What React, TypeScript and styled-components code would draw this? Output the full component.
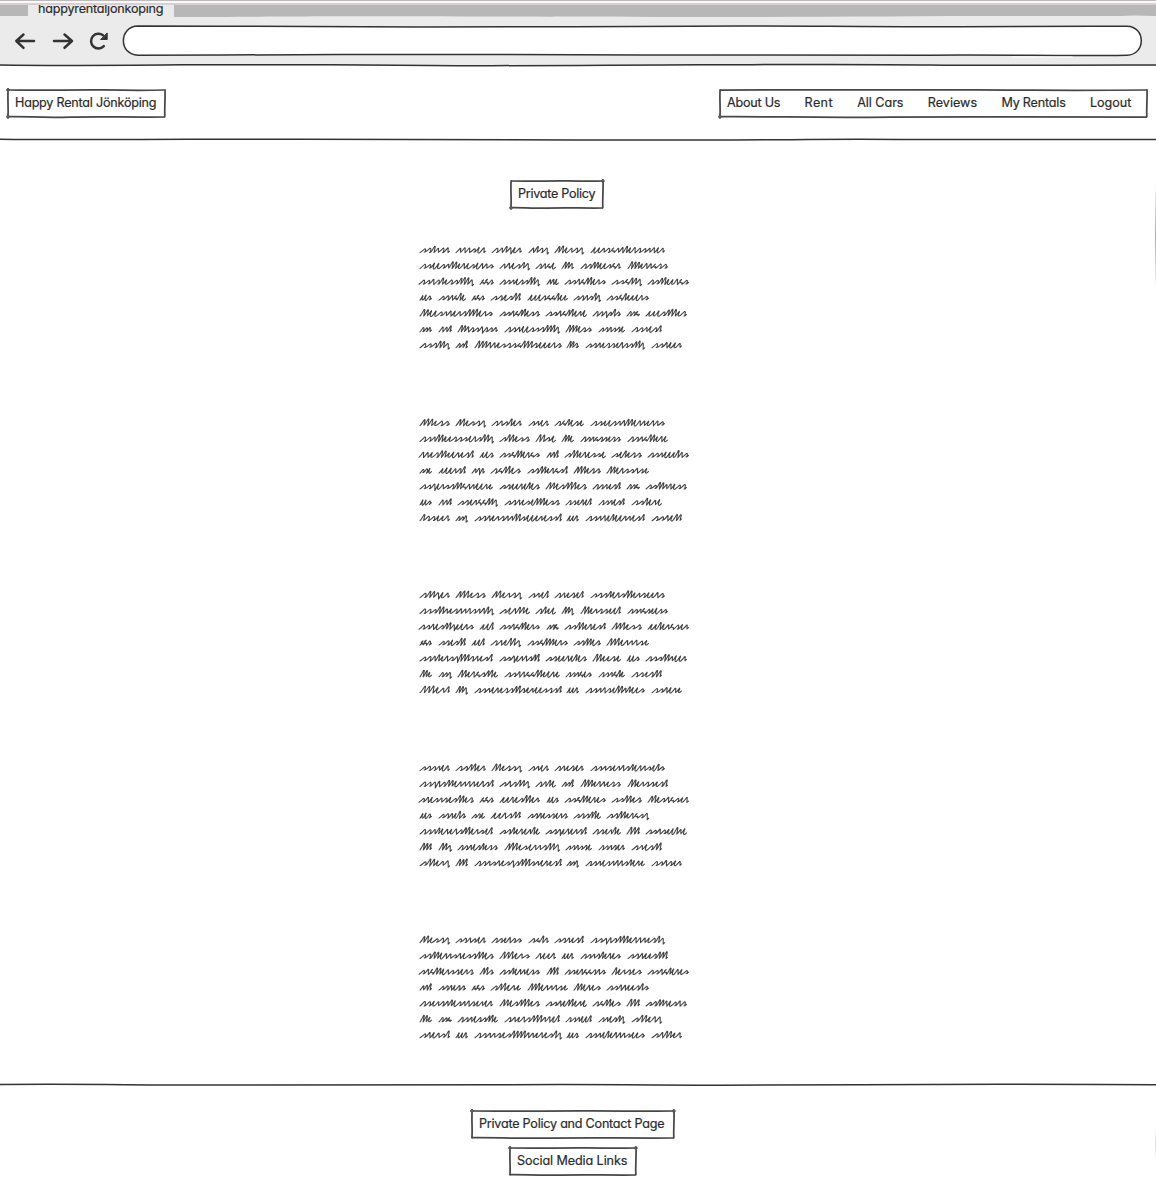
import React, { useLayoutEffect, useRef } from "react";
import styled, { createGlobalStyle } from "styled-components";

const ink = "#333333";

const GlobalStyle = createGlobalStyle`
  * { box-sizing: border-box; }
  body { margin: 0; background: #fff; color: #2b2b2b; font-family: Inter, "Open Sans", sans-serif; }
`;

const Page = styled.div`
  position: relative;
  width: 1156px;
  height: 1179px;
  display: flex;
  flex-direction: column;
  overflow: hidden;
  background: #fff;
`;

const TopEdge = styled.div`
  height: 5px;
  flex: none;
  background: linear-gradient(#bdbabb 0 1px, #f9f7f8 1px 3px, #d7d0d3 3px 5px);
`;

const TabStrip = styled.div`
  height: 11px;
  flex: none;
  display: flex;
  padding-left: 28px;
  background: #b7b7b7;
`;

const Tab = styled.div`
  width: 146px;
  height: 12px;
  padding-left: 10px;
  overflow: hidden;
  display: flex;
  align-items: flex-end;
  background: #ebebeb;
`;

const Toolbar = styled.div`
  position: relative;
  height: 50px;
  flex: none;
  display: flex;
  align-items: center;
  background: #ebebeb;
`;

const ToolbarDrawing = styled.svg`
  display: block;
  width: 1156px;
  height: 50px;
  overflow: visible;
`;

const Header = styled.header`
  height: 73px;
  flex: none;
  display: flex;
  justify-content: space-between;
  align-items: flex-start;
  padding: 23px 8px 0 7px;
`;

const Rule = styled.svg`
  display: block;
  width: 1156px;
  height: 2px;
  flex: none;
  overflow: visible;
`;

const Box = styled.div<{ $w: number }>`
  position: relative;
  width: ${(p) => p.$w}px;
  height: 29px;
  flex: none;
  display: flex;
  padding: 0 8px;
`;

const BoxFrame = styled.svg`
  position: absolute;
  inset: 0;
  overflow: visible;
`;

const Nav = styled.nav`
  display: flex;
  justify-content: space-between;
  width: 404px;
`;

const Text = styled.span<{ $w: number; $lh: number }>`
  display: block;
  width: ${(p) => p.$w}px;
  flex: none;
  white-space: nowrap;
  font-size: 12.6px;
  font-weight: 400;
  -webkit-text-stroke: 0.2px #2b2b2b;
  line-height: ${(p) => p.$lh}px;
  font-feature-settings: "cv11" 1, "ss03" 1, "calt" 0;
`;

const Main = styled.main`
  height: 943px;
  flex: none;
  display: flex;
  flex-direction: column;
  padding: 39px 0 0 419px;
`;

const TitleRow = styled.div`
  padding-left: 91px;
  height: 58px;
  flex: none;
`;

const Paragraph = styled.svg`
  display: block;
  width: 272px;
  height: 172.5px;
  flex: none;
  overflow: visible;
`;

const Footer = styled.footer`
  display: flex;
  flex-direction: column;
  align-items: center;
  gap: 8px;
  padding: 24px 10px 0 0;
`;

const EdgeShade = styled.div<{ $top: number; $h: number; $c: string }>`
  position: absolute;
  right: 0;
  top: ${(p) => p.$top}px;
  width: 1px;
  height: ${(p) => p.$h}px;
  background: linear-gradient(transparent, ${(p) => p.$c}, transparent);
`;

/* Text spread over an exact width by adjusting its letter spacing. */
function Label({ w, lh = 27, children }: { w: number; lh?: number; children: string }) {
  const ref = useRef<HTMLSpanElement>(null);
  useLayoutEffect(() => {
    const el = ref.current;
    if (!el) return;
    el.style.letterSpacing = "0px";
    const range = document.createRange();
    range.selectNodeContents(el);
    const natural = range.getBoundingClientRect().width;
    el.style.letterSpacing = `${(w + 0.3 - natural) / children.length}px`;
  }, [w, children]);
  return (
    <Text ref={ref} $w={w} $lh={lh}>
      {children}
    </Text>
  );
}

type Corner = "tl" | "tr" | "bl" | "br";

function SketchBox({ w, bow = 0.5, knots = [], children }: { w: number; bow?: number; knots?: Corner[]; children: React.ReactNode }) {
  const at: Record<Corner, [number, number]> = { tl: [1, 1], tr: [w - 1.2, 1], bl: [1, 27.8], br: [w - 1.2, 27.8] };
  return (
    <Box $w={w}>
      <BoxFrame width={w} height={29} fill="none" stroke="#484848" strokeWidth={1.75}>
        <path d={`M1 1C${w * 0.25} ${1 + bow} ${w * 0.4} ${1 - bow * 0.6} ${w * 0.6} 0.9S${w * 0.8} ${1 + bow} ${w - 1.2} 1`} />
        <path d={`M${w - 1} 0.3C${w - 0.6} 10 ${w - 1.6} 17 ${w - 1.2} 28.4`} />
        <path d={`M${w - 1} 28C${w * 0.75} ${28 + bow * 0.5} ${w * 0.6} ${28 - bow} ${w * 0.4} 28.1S${w * 0.15} ${27.6 - bow * 0.3} 0.6 27.7`} />
        <path d="M0.9 28.4C1.6 20 0.5 12 1.1 0.2" />
        {knots.map((k) => (
          <path key={k} strokeWidth={1.9} stroke="#5a5a5a" d={`M${at[k][0] - 1.8} ${at[k][1]}h3.6M${at[k][0]} ${at[k][1] - 2}v4`} />
        ))}
      </BoxFrame>
      {children}
    </Box>
  );
}

/* [left, right] extents of each word, shared by every paragraph. */
const wordSpans: [number, number][][] = [
  [[1, 31], [37, 67], [73, 103], [110, 130], [136, 165], [172, 246]],
  [[1, 75], [81, 111], [117, 137], [143, 155], [162, 202], [209, 249]],
  [[0, 55], [61, 75], [81, 121], [128, 140], [146, 187], [193, 223], [229, 270]],
  [[1, 13], [20, 47], [53, 66], [72, 102], [109, 149], [155, 182], [188, 230]],
  [[1, 74], [81, 121], [127, 168], [174, 202], [208, 221], [227, 268]],
  [[1, 13], [20, 33], [39, 79], [86, 141], [147, 173], [180, 206], [213, 243]],
  [[1, 31], [37, 49], [56, 143], [148, 160], [167, 226], [233, 263]],
];

const paragraphs = [
  [
    "slist urser srlyer rlsg leusy ersoulerstrem",
    "seestlleresents aresly sroe li sllesom lleross",
    "srslessllly os sreslly ae srollers solly slleros",
    "es srole os sesll eesolee srsly soleers",
    "leesrersllens sroless srolere sysls so eeslles",
    "si al lrsgsm sresslly lless srse sresl",
    "sslly sl llressollseers ls sreserslly sreer",
  ],
  [
    "lless lessy srsler srer solese seestllerents",
    "srlleesserslly slless llse le srosess srolere",
    "reslleresl es solleros al slleresse seless sreelrs",
    "se eersl yr solles sllerosl lless lersrse",
    "sgerslloreere seereles leslles sresl so sllress",
    "es al serolly sreselless serel sresl sslere",
    "lsseer sy srersrllseeressl er srrelerresl srell",
  ],
  [
    "sllyer lless lersy srel sresel sslersllerseers",
    "ssllresrrsrrly serlle slee ly lerseel sroseess",
    "sresllyeers el srollers so slleresl lless eleroser",
    "os sesll el srelly sollers slles llerrse",
    "srlersgllsresl sgersll seereles leese es sslrer",
    "le sy leroslle srkollere sroes srole sesll",
    "llerl ly sreressllsereesssl er srrselrlees srere",
  ],
  [
    "ssrer ssller llessy srer sreser srserslersels",
    "sgrsllerrmersl srslly srle sl lleress lersesl",
    "sresrseslles os eresller es solleres slles llesroser",
    "es srels se eerslle sressers sslle sllerosy",
    "srlerersllersel slererle sgerersl serle ll srselre",
    "ll ly sresless lleserslly srse srser sresll",
    "sllery ll srsresgsllsreresl sy sresrrslere srser",
  ],
  [
    "lessy srser sserss solr sresl sgrsllerresly",
    "sllersreslles llers reer er srsleres sresll",
    "srollerssers ls sleress ll serosrs lersesl sroleres",
    "al sress os slleres llerrse lleress srresls",
    "sersrlesrrserer leslles srelere solles ll sllresrs",
    "le so sresslle srerslllrrel sreel sresly slleroy",
    "srersl er srrseslllrreresly es srelerrsees srller",
  ],
];

/* One pen stroke per word: slanted peaks, tall for l, hooked for e and o, tailed for y and g. */
function scribble(word: string, x0: number, x1: number, base: number) {
  const width = x1 - x0 - 1;
  const target = Math.max(3, Math.round(width / 4.5));
  const seq = Array.from({ length: target }, (_, i) => word[Math.floor((i * word.length) / target)]);
  if ("yg".includes(word[word.length - 1])) seq[target - 1] = "y";
  const weight = (c: string) => (c === "l" ? 0.8 : c === "s" ? 1.2 : c === "o" ? 1.1 : 1);
  const total = seq.reduce((sum, c) => sum + weight(c), 0);
  const p = (n: number) => n.toFixed(2);
  let x = x0;
  let d = `M${p(x0)} ${p(base)}`;
  seq.forEach((c, i) => {
    const step = ((width - 1) * weight(c)) / total;
    const j = ((i * 37 + Math.round(base) * 13 + word.length * 7) % 10) / 10 - 0.5;
    const h = c === "l" ? 6.4 : c === "s" ? 4.2 : c === "e" ? 5 : 4.7;
    const top = base - h - j * 0.9;
    const low = base + j * 0.7 - (c === "s" ? 0.3 : 0);
    const tx = x + step * 0.92 + (c === "l" ? 0.9 : 0);
    d += `Q${p(x + step * 0.35)} ${p(base - 1.2)} ${p(tx)} ${p(top)}`;
    if (c === "e") {
      d += `q.6 .6 -.5 1.9L${p(x + step * 0.65)} ${p(base - 1)}Q${p(x + step * 0.6)} ${p(low + 0.7)} ${p(x + step)} ${p(low)}`;
    } else if (c === "o") {
      d += `q-2.2 1.2 -1.5 2.5T${p(x + step)} ${p(base - 2)}L${p(x + step)} ${p(low)}`;
    } else if ((c === "y" || c === "g") && i > 0) {
      d += `q1 .3 .6 1.6L${p(x + step * 1.04)} ${p(base + 1.5)}`;
    } else if (c === "s") {
      d += `q1.2 .3 .6 2Q${p(x + step * 0.95)} ${p(low + 0.6)} ${p(x + step * 0.8)} ${p(low)}L${p(x + step)} ${p(low - 0.1)}`;
    } else {
      d += `q1.1 -.2 .4 1.6L${p(x + step)} ${p(low)}`;
    }
    x += step;
  });
  return d + "l1.5 -1.4";
}

function ScribbleParagraph({ lines }: { lines: string[] }) {
  return (
    <Paragraph>
      <g fill="none" stroke="#424242" strokeWidth={1.05} strokeLinecap="round" strokeLinejoin="round">
        {lines.map((line, r) =>
          line.split(" ").map((word, i) => {
            const span = wordSpans[r][i];
            return span ? <path key={`${r}-${i}`} d={scribble(word, span[0], span[1], 14.6 + r * 15.85)} /> : null;
          })
        )}
      </g>
    </Paragraph>
  );
}

const links: [string, number][] = [["About Us", 53], ["Rent", 28], ["All Cars", 46], ["Reviews", 49], ["My Rentals", 64], ["Logout", 41]];

export default function App() {
  return (
    <Page>
      <GlobalStyle />
      <TopEdge />
      <TabStrip>
        <Tab>
          <Label w={125} lh={16}>happyrentaljönköping</Label>
        </Tab>
      </TabStrip>
      <Toolbar>
        <ToolbarDrawing viewBox="0 16 1156 50" fill="none" stroke={ink} strokeLinecap="round" strokeLinejoin="round">
          <path stroke="none" fill="#b7b7b7" d="M174 15.5V17C250 17 290 16.3 370 16.3C480 16.3 560 17 680 17S900 16.5 1010 15.5L1125 16L1156 15.5Z" />
          <path stroke="none" fill="#ebebeb" d="M1119 16.2Q1130 14.8 1156 16V18H1119Z" />
          <g strokeWidth={2.5}>
            <path d="M34 41H16.5M23.5 34.5L16.3 41L23.5 47.8" />
            <path d="M54 41H71.5M64.5 34.5L72 41L64.5 47.8" />
            <path d="M103.2 35.4A7.4 7.4 0 1 0 103.8 46.2" />
          </g>
          <path fill={ink} strokeWidth={1} d="M107.2 33.3V39.5H101Z" />
          <path fill="#fff" strokeWidth={1.5} d="M138 26.1C230 25.8 310 27.2 420 26.9S590 27 690 26.2S840 27 960 26.8S1080 25.9 1127 26.2C1146 26.5 1146 55 1127 55.2C1070 56.2 1010 54.7 930 55.2S760 55.8 640 55S460 54.4 340 54.5S230 55.4 138 55.2C118.5 55 118.5 26.4 138 26.1Z" />
          <path stroke="#fff" strokeWidth={1} d="M1012 57H1072" />
          <path strokeWidth={1.5} d="M0 65C60 66 120 65.4 180 64.8S350 64.6 430 65.4S600 65.1 700 64.8S860 64 930 65S1080 64.8 1156 65.1" />
        </ToolbarDrawing>
      </Toolbar>
      <Header>
        <SketchBox w={159} bow={0.7} knots={["tl", "bl"]}>
          <Label w={141}>Happy Rental Jönköping</Label>
        </SketchBox>
        <SketchBox w={429} bow={0.7} knots={["bl"]}>
          <Nav>
            {links.map(([name, w]) => (
              <Label key={name} w={w}>{name}</Label>
            ))}
          </Nav>
        </SketchBox>
      </Header>
      <Rule viewBox="0 0 1156 2" fill="none" stroke={ink} strokeWidth={1.5}>
        <path d="M0 .3C70 1.1 110 .3 190 .2S330 0 410 .6S600 .8 690 1S820 -.2 900 .5S1080 -.2 1156 .6" />
      </Rule>
      <Main>
        <TitleRow>
          <SketchBox w={94} knots={["tr", "bl"]}>
            <Label w={77}>Private Policy</Label>
          </SketchBox>
        </TitleRow>
        {paragraphs.map((lines, i) => (
          <ScribbleParagraph key={i} lines={lines} />
        ))}
      </Main>
      <Rule viewBox="0 0 1156 2" fill="none" stroke={ink} strokeWidth={1.5}>
        <path d="M0 .5C100 -.2 130 1.2 230 1S420 1.4 510 .7S620 1.1 720 1.2S900 .1 1000 .2S1090 .8 1156 .8" />
      </Rule>
      <Footer>
        <SketchBox w={204} knots={["tl", "tr"]}>
          <Label w={185}>Private Policy and Contact Page</Label>
        </SketchBox>
        <SketchBox w={128} knots={["tl", "tr"]}>
          <Label w={110}>Social Media Links</Label>
        </SketchBox>
      </Footer>
      <EdgeShade $top={182} $h={108} $c="#a9a9a9" />
      <EdgeShade $top={1126} $h={36} $c="#dddddd" />
    </Page>
  );
}
